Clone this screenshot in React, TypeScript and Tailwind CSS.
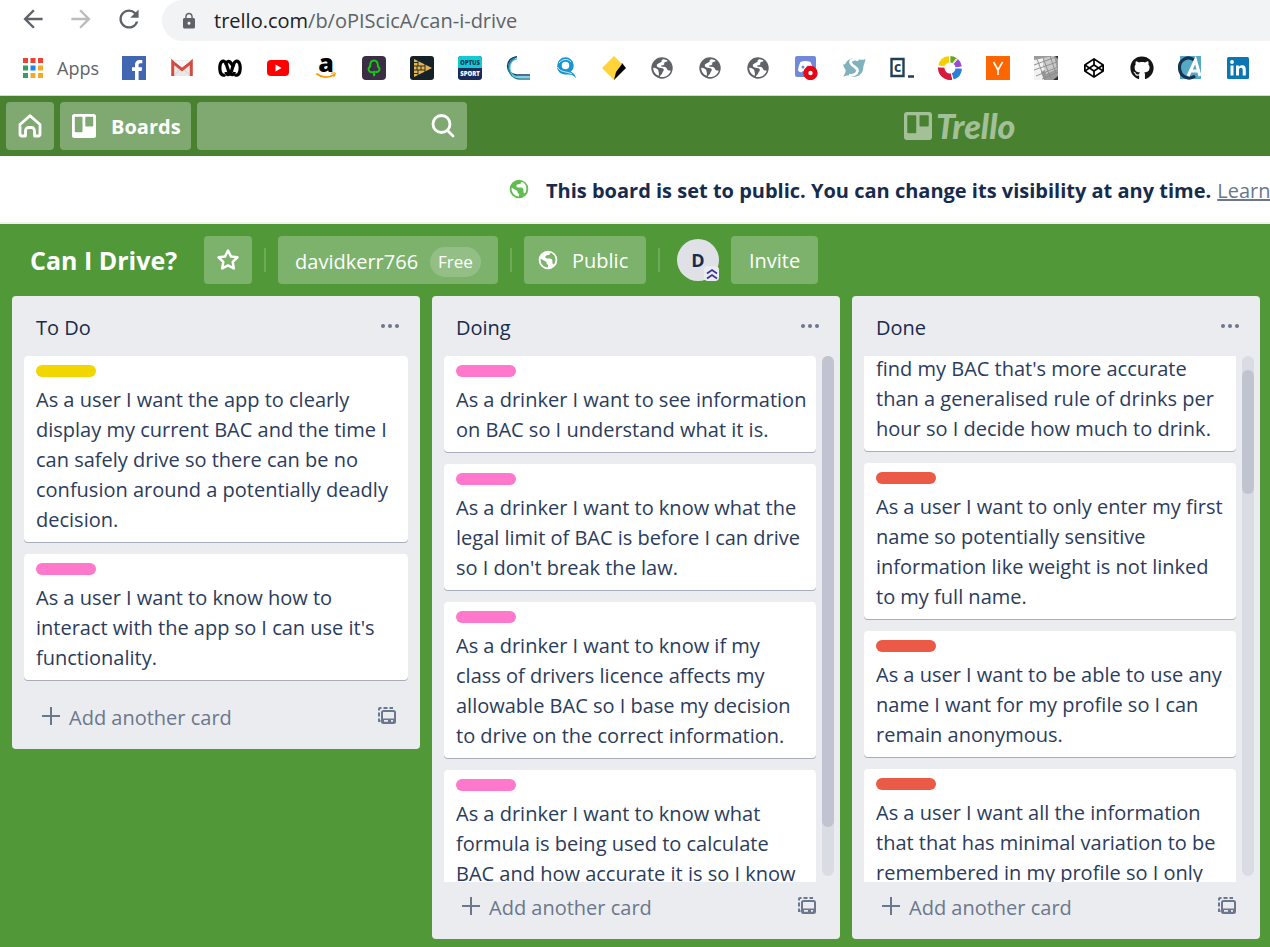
import React from "react";
import { FaCodepen, FaGithub } from "react-icons/fa";
import { MdArrowBack, MdArrowForward, MdLock, MdRefresh } from "react-icons/md";

type CardData = { label: string; text: string };

const yellow = "bg-[#f2d600]";
const pink = "bg-[#ff78cb]";
const red = "bg-[#eb5a46]";

const todo: CardData[] = [
  { label: yellow, text: "As a user I want the app to clearly display my current BAC and the time I can safely drive so there can be no confusion around a potentially deadly decision." },
  { label: pink, text: "As a user I want to know how to interact with the app so I can use it's functionality." },
];

const doing: CardData[] = [
  { label: pink, text: "As a drinker I want to see information on BAC so I understand what it is." },
  { label: pink, text: "As a drinker I want to know what the legal limit of BAC is before I can drive so I don't break the law." },
  { label: pink, text: "As a drinker I want to know if my class of drivers licence affects my allowable BAC so I base my decision to drive on the correct information." },
  { label: pink, text: "As a drinker I want to know what formula is being used to calculate BAC and how accurate it is so I know" },
];

const done: CardData[] = [
  { label: "", text: "find my BAC that's more accurate than a generalised rule of drinks per hour so I decide how much to drink." },
  { label: red, text: "As a user I want to only enter my first name so potentially sensitive information like weight is not linked to my full name." },
  { label: red, text: "As a user I want to be able to use any name I want for my profile so I can remain anonymous." },
  { label: red, text: "As a user I want all the information that that has minimal variation to be remembered in my profile so I only" },
];

function Svg({ children, className = "size-6", box = "0 0 24 24" }: { children: React.ReactNode; className?: string; box?: string }) {
  return (
    <svg viewBox={box} className={className} fill="none" aria-hidden="true">
      {children}
    </svg>
  );
}

function WorldIcon({ className }: { className: string }) {
  return (
    <Svg className={className} box="0 0 20 20">
      <path
        fillRule="evenodd"
        fill="currentColor"
        d="M10 .7a9.300 9.300 0 1 0 0 18.600A9.300 9.300 0 0 0 10 .7ZM2.700 8.800 7.200 11.300c1.400.7 1.500 1.700 1.500 2.700l1.600 1.200-.5 2.200C5.500 17.400 2 13.500 2.700 8.800ZM7.500 7.800C7 6.500 7.600 5.500 9 5.200l2.500-.5 1-2c2.600.9 4.300 2.900 4.800 5.500.4 2.300-.1 4.500-1.500 6.300l-1.300-1.100-.1-2.600c-.2-1.500-1.100-2.200-2.500-2.300-1.500-.1-2.600.6-4.400-.7Z"
      />
    </Svg>
  );
}

function BoardIcon({ className }: { className: string }) {
  return (
    <Svg className={className}>
      <path
        fillRule="evenodd"
        fill="currentColor"
        d="M2.500 0h19A2.500 2.500 0 0 1 24 2.500v19a2.500 2.500 0 0 1-2.500 2.500h-19A2.500 2.500 0 0 1 0 21.500v-19A2.500 2.500 0 0 1 2.500 0ZM3.500 2.700a.7.7 0 0 0-.7.7v14.200c0 .4.3.7.7.7h6.300c.4 0 .7-.3.7-.7V3.400a.7.7 0 0 0-.7-.7H3.500ZM14 2.700a.7.7 0 0 0-.7.7v8.400c0 .4.3.7.7.7h6.500c.4 0 .7-.3.7-.7V3.400a.7.7 0 0 0-.7-.7H14Z"
      />
    </Svg>
  );
}

function GlobeFavicon() {
  return (
    <Svg>
      <circle cx="12" cy="12" r="10.700" fill="#5f6368" />
      <path d="M13.500 3.300c-1.500.3-2.300 1.300-1.900 2.400L8.900 7.300c-2.600.9-2.700 3-.9 3.900 2 .9 4.400.2 5.600 1.900.9 1.500-1 2.300-1.200 3.600-.2 1.400-1.600 2-2.300 3.300-.3.600.1 1 .8 1 4.500.4 8.400-1.900 9.900-6.300-1.700-.2-2.600.1-3.500-1.200-.6-1.700-1.500-2.700-3.400-2.800-1.200 0-2.600.1-3-.7.5-1.200 2.700-.3 3.300-1.500.4-1-.5-1.500.5-2.200 1-.6 2.200-.5 3-1.200-1-1-2.500-1.700-4.200-1.800Z" fill="#fff" />
      <path d="M3.200 11.800c2.700.3 5 1.200 5.200 3 .1 1.500 1 2.600.3 5C5.200 18.500 3.200 15.300 3.200 11.800Z" fill="#fff" />
    </Svg>
  );
}

const bookmarks: { name: string; icon: React.ReactNode }[] = [
  {
    name: "Facebook",
    icon: (
      <Svg>
        <path fill="#4267b2" d="M0 0h24v24H0z" />
        <path fill="#fff" d="M13 24v-9h-3v-3.700h3V8.600c0-3 1.900-4.700 4.600-4.700 1.300 0 2.400.1 2.700.1v3.300h-1.900c-1.500 0-1.800.7-1.800 1.800v2.200h3.500l-.5 3.700h-3v9z" />
      </Svg>
    ),
  },
  {
    name: "Gmail",
    icon: (
      <Svg>
        <path fill="#e8e8e8" d="M3 4h18v16H3z" />
        <path d="m4 19 8-7 8 7" stroke="#d3d3d3" />
        <path d="M2.700 20V6l9.300 7.500L21.300 6v14" stroke="#d54b3f" strokeWidth="3" />
        <path d="m3 4.500 9 7 9-7" fill="#f6f6f6" />
      </Svg>
    ),
  },
  {
    name: "ABC",
    icon: (
      <Svg>
        <g stroke="#000" strokeWidth="3.200" strokeLinejoin="round">
          <path d="M7 18.500C5 20.500 1.800 18.500 1.800 12S5 3.500 7.500 6.500c2 3 2 8 4.500 11 2 2.300 4 1 4.500-1.500" />
          <path d="M8 16c.5 3 3 3.500 4.500 1 2-3 2-7.500 4-10.500 2.500-3 5.700-1 5.700 5.500s-3.200 8.500-5.200 6.500" />
          <path d="M8 9c.5-3.500 2.500-4.500 4-3s2 2 3.500 5" />
        </g>
      </Svg>
    ),
  },
  {
    name: "YouTube",
    icon: (
      <Svg>
        <rect x="1" y="4" width="22" height="16" rx="4" fill="red" />
        <path fill="#fff" d="m9.500 8.500 6 3.500-6 3.500z" />
      </Svg>
    ),
  },
  {
    name: "Amazon",
    icon: (
      <Svg>
        <text x="12" y="16" textAnchor="middle" fontFamily="Open Sans, sans-serif" fontWeight="800" fontSize="25" fill="#000">a</text>
        <path d="M3 18c5 4 12 4 17 .8" stroke="#f90" strokeWidth="1.800" strokeLinecap="round" />
        <path d="M17.500 17.300c2-.7 3.500-.5 3.700-.1s-.2 2-1.500 3.400" stroke="#f90" strokeWidth="1.100" strokeLinecap="round" />
      </Svg>
    ),
  },
  {
    name: "Gumtree",
    icon: (
      <Svg>
        <rect width="24" height="24" rx="4" fill="#3b2d44" />
        <path d="M12 19.500v-3.500c-3 1-5.500-.5-5.500-3 0-1.500.8-2 1.500-2.500C8 6.500 10 4.500 12 4.500s4 2 4 6c.7.500 1.500 1 1.500 2.500 0 2-1.500 3.300-3.500 3" stroke="#13c913" strokeWidth="2" strokeLinecap="round" />
      </Svg>
    ),
  },
  {
    name: "Arrow",
    icon: (
      <Svg>
        <rect width="24" height="24" rx="3" fill="#152128" />
        <path fill="#e9b44c" d="M4 3v18l18-9z" />
        <path d="M4 6.500h4M4 10h11M4 14h11M4 17.500h4M8 5v5M11 10v4M7 10v4M15 8v8M8 14v5" stroke="#152128" strokeWidth=".9" />
      </Svg>
    ),
  },
  {
    name: "Optus Sport",
    icon: (
      <Svg>
        <rect width="24" height="24" rx="3" fill="#1b2a5c" />
        <path fill="#10cbd6" d="M0 12V3a3 3 0 0 1 3-3h18a3 3 0 0 1 3 3v9z" />
        <text x="12" y="9" textAnchor="middle" fontFamily="Open Sans, sans-serif" fontWeight="800" fontSize="6" fill="#123c5a">OPTUS</text>
        <text x="12" y="20" textAnchor="middle" fontFamily="Open Sans, sans-serif" fontWeight="800" fontSize="6" fill="#fff">SPORT</text>
      </Svg>
    ),
  },
  {
    name: "Curve",
    icon: (
      <Svg>
        <path d="M11 .8C-2 2-1 19 11 19h13" stroke="#173f67" strokeWidth="1.600" />
        <path d="M11 2.800C1 4 1 20 12 21h12" stroke="#5cc3d8" strokeWidth="1.600" />
        <path d="M9 2C-1 6 1 22 13 23h11" stroke="#237e9d" strokeWidth="1.400" />
      </Svg>
    ),
  },
  {
    name: "Q",
    icon: (
      <Svg>
        <circle cx="11.500" cy="9.500" r="6" stroke="#1795d3" strokeWidth="4.500" />
        <path d="M3 10c0 7 6 9 10 8.500 4-.4 6 .5 9 3.500-1-4-3-5-5.500-6.500L9 15z" fill="#1795d3" />
        <path d="M3.500 11c3 6 9 4 14.500 7M5 7c3-4 9-5 12-1" stroke="#fff" strokeWidth=".8" />
      </Svg>
    ),
  },
  {
    name: "CommBank",
    icon: (
      <Svg>
        <path d="M12 24 24 12l-4-5-8 9z" fill="#000" />
        <path d="M12 0 0 12l12 12 2-8 6-8z" fill="#ffd43b" />
      </Svg>
    ),
  },
  { name: "Site one", icon: <GlobeFavicon /> },
  { name: "Site two", icon: <GlobeFavicon /> },
  { name: "Site three", icon: <GlobeFavicon /> },
  {
    name: "Discord",
    icon: (
      <Svg>
        <rect x="1" width="21" height="21" rx="2" fill="#7289da" />
        <path d="M6.500 6c3-1.500 7-1.500 10 0 1.500 3 2.500 6 2.300 9-1.200 1-2.500 1.300-3.600 1.300L14 15H9l-1.200 1.300c-1.100 0-2.600-.3-3.600-1.300C4 12 5 9 6.500 6Z" fill="#fff" />
        <circle cx="9" cy="11" r="1.500" fill="#7289da" />
        <circle cx="14" cy="11" r="1.500" fill="#7289da" />
        <circle cx="16.500" cy="17" r="7.200" fill="#e40613" />
        <circle cx="16.500" cy="17" r="2.200" fill="#fff" />
      </Svg>
    ),
  },
  {
    name: "S",
    icon: (
      <Svg>
        <path d="M1 8c1 .8 1.800.8 2.500-.5C5.500 2.500 12 .8 16.500 3.200c2 1 4.500.8 7-.2-.5 3.500-2 5.500-2.200 8.500-.3 8.500-8.800 11-13.800 8.500-2-1-4.500.2-6.500.8 2-3 3-4.500 2.500-7.300C2 12 1.500 10 1 8Z" fill="#7fb2bd" />
        <path d="M16.500 4c-5-2-9 .3-7.500 3.500s7 4 6.500 7.500c-.5 3-4.500 5-8.500 4" stroke="#fff" strokeWidth="2.800" />
      </Svg>
    ),
  },
  {
    name: "Codecademy",
    icon: (
      <Svg>
        <path d="M1.500 3h12v17h-12zM18 20.500h6" stroke="#204056" strokeWidth="2.400" />
        <text x="7.500" y="16" textAnchor="middle" fontFamily="Open Sans, sans-serif" fontWeight="700" fontSize="14" fill="#204056">c</text>
      </Svg>
    ),
  },
  {
    name: "Colour wheel",
    icon: (
      <Svg>
        <g strokeWidth="6.500">
          <path d="M3.500 10A8.700 8.700 0 0 1 11 3.300" stroke="#f5cf00" />
          <path d="M12 3.300a8.700 8.700 0 0 1 5 1.700" stroke="#6aa51e" />
          <path d="M17.800 5.500A8.700 8.700 0 0 1 20.700 11" stroke="#9b4bd0" />
          <path d="M20.700 12.500a8.700 8.700 0 0 1-6 7.800" stroke="#2b7fd6" />
          <path d="M13.700 20.600A8.700 8.700 0 0 1 3.300 11.500" stroke="#d41b3c" />
        </g>
        <path d="m1 11 6-1M12 0v7M18 3l-4 5M24 11l-7 1M15 24l-2-8" stroke="#fff" strokeWidth=".8" />
      </Svg>
    ),
  },
  {
    name: "Hacker News",
    icon: (
      <Svg>
        <path fill="#f60" d="M0 0h24v24H0z" />
        <path d="m7.500 6 4.500 8 4.500-8M12 13v6" stroke="#fff" strokeWidth="1.600" />
      </Svg>
    ),
  },
  {
    name: "Keyboard",
    icon: (
      <Svg>
        <path fill="#9b9b9b" d="M0 0h24v24H0z" />
        <path fill="#f2f2f2" d="M0 4v20h10l-3-8 10-6L10 2z" />
        <path fill="#c9c9c9" d="m9 2 11-2 3 13-11 5-3-8z" />
        <path d="M0 9 22 1M0 14 23 6M2 20l22-9M8 23l16-7M3 3l8 21M9 2l8 21M16 0l6 17" stroke="#8b8b8b" strokeWidth=".9" />
        <path d="M24 0v3l-3-3zM24 20v4h-5z" fill="#333" />
      </Svg>
    ),
  },
  { name: "CodePen", icon: <FaCodepen className="size-5 text-black" /> },
  { name: "GitHub", icon: <FaGithub className="size-6 text-[#161514]" /> },
  {
    name: "Coder Academy",
    icon: (
      <Svg>
        <path fill="#57a9c3" d="M2 0h21v23H2z" />
        <path d="M16 4C10-1 1 4 1.500 12S10 25 17 20" stroke="#173452" strokeWidth="3.200" />
        <path d="m10 20 7.500-16L22 20M13 15h8" stroke="#fff" strokeWidth="3" />
      </Svg>
    ),
  },
  {
    name: "LinkedIn",
    icon: (
      <Svg>
        <rect x="1" y="1" width="22" height="22" rx="1.500" fill="#0a76b4" />
        <path fill="#fff" d="M4.500 9.500h3v10h-3zM10 9.500h2.900v1.400c.5-.9 1.500-1.700 3.200-1.700 3 0 3.700 2 3.700 4.700v5.600h-3.100v-5c0-1.300 0-2.800-1.700-2.800s-2 1.300-2 2.700v5.100h-3z" />
        <circle cx="6" cy="6" r="1.900" fill="#fff" />
      </Svg>
    ),
  },
];

const appColours = ["#ea4335", "#ea4335", "#ea4335", "#34a060", "#1a87f0", "#f0ac26", "#34a060", "#f0ac26", "#f0ac26"];

function BrowserBar() {
  return (
    <div className="shrink-0 border-b border-[#d5dbd2] bg-white">
      <div className="flex h-[41px] items-center text-[#5f6368]">
        <nav className="flex w-[162px] shrink-0 items-center gap-6 pb-1 pl-[21px]" aria-label="Browser">
          <button aria-label="Back" className="size-6"><MdArrowBack className="size-6 scale-120" /></button>
          <button aria-label="Forward" className="size-6 text-[#babcbe]"><MdArrowForward className="size-6 scale-120" /></button>
          <button aria-label="Reload" className="size-6"><MdRefresh className="size-6 scale-120" /></button>
        </nav>
        <div className="flex h-full flex-1 items-center gap-4 rounded-l-full bg-[#f1f3f4] pl-[18px]">
          <MdLock className="size-[18px]" />
          <a href="#address" className="text-[20px] leading-6 whitespace-nowrap">
            <span className="text-[#202124]">trello.com</span>/b/oPIScicA/can-i-drive
          </a>
        </div>
      </div>
      <div className="flex h-[54px] items-center gap-6 overflow-hidden pl-[23px]">
        <a href="#apps" className="flex w-[75px] shrink-0 items-center gap-[14px] text-[18px] text-[#5f6368]">
          <Svg className="size-5 shrink-0" box="0 0 20 20">
            {appColours.map((c, i) => (
              <rect key={i} x={(i % 3) * 7.5} y={Math.floor(i / 3) * 7.5} width="5" height="5" fill={c} />
            ))}
          </Svg>
          Apps
        </a>
        {bookmarks.map((b) => (
          <a key={b.name} href="#bookmark" aria-label={b.name} className="flex size-6 shrink-0 items-center justify-center">
            {b.icon}
          </a>
        ))}
      </div>
    </div>
  );
}

function TrelloHeader() {
  return (
    <header className="flex h-[60px] shrink-0 items-center gap-[6px] bg-[#488231] px-[6px] text-white">
      <button aria-label="Home" className="flex size-12 shrink-0 items-center justify-center rounded bg-[#80a972]">
        <Svg>
          <path d="M2 10.500 12 1.700l10 8.800V20a2 2 0 0 1-2 2h-3.500v-5.500a3 3 0 0 0-3-3h-3a3 3 0 0 0-3 3V22H4a2 2 0 0 1-2-2z" stroke="currentColor" strokeWidth="2.800" strokeLinejoin="round" />
        </Svg>
      </button>
      <button className="flex h-12 w-[131px] shrink-0 items-center gap-[15px] rounded bg-[#80a972] pl-3 text-[20px] font-bold">
        <BoardIcon className="size-6 shrink-0" />
        <span className="pt-[2px]">Boards</span>
      </button>
      <label className="flex h-12 w-[270px] shrink-0 items-center rounded bg-[#80a972] px-3">
        <input aria-label="Search" className="min-w-0 flex-1 bg-transparent outline-none" />
        <Svg>
          <circle cx="10.500" cy="10" r="8.500" stroke="currentColor" strokeWidth="2.800" />
          <path d="m16.500 16.500 5.500 5.500" stroke="currentColor" strokeWidth="2.800" strokeLinecap="round" />
        </Svg>
      </label>
      <a href="#home" className="ml-[431px] flex items-center gap-1 text-[#a3c098]">
        <BoardIcon className="size-[28px]" />
        <span className="font-[Lato] text-[34px] leading-8 font-black italic">Trello</span>
      </a>
    </header>
  );
}

function Divider({ className = "mx-3" }: { className?: string }) {
  return <span className={`h-6 w-[2px] shrink-0 bg-[#6fa95a] ${className}`} />;
}

function BoardHeader() {
  return (
    <div className="flex h-[72px] shrink-0 items-center pl-[30px] text-[20px] whitespace-nowrap text-white">
      <h1 className="w-[174px] shrink-0 pt-[2px] text-[25px] font-bold">Can I Drive?</h1>
      <button aria-label="Star board" className="flex size-12 shrink-0 items-center justify-center rounded bg-[#7cb26b]">
        <Svg>
          <path d="m12 2.500 2.900 5.900 6.500.9-4.700 4.600 1.100 6.500-5.800-3-5.800 3 1.100-6.500-4.700-4.600 6.500-.9z" stroke="currentColor" strokeWidth="2.500" strokeLinejoin="round" />
        </Svg>
      </button>
      <Divider />
      <button className="flex h-12 w-[220px] shrink-0 items-center justify-center gap-3 rounded bg-[#7cb26b] pt-[3px]">
        davidkerr766
        <span className="rounded-full bg-[#93bf86] px-2 text-[17px] leading-[30px]">Free</span>
      </button>
      <Divider />
      <button className="flex h-12 w-[122px] shrink-0 items-center gap-[14px] rounded bg-[#7cb26b] pl-[14px]">
        <WorldIcon className="size-5" />
        <span className="pt-[2px]">Public</span>
      </button>
      <Divider className="mr-[17px] ml-3" />
      <div className="relative flex size-[42px] shrink-0 items-center justify-center rounded-full bg-[#dfe1e6] text-[18px] font-bold text-[#172b4d]">
        D
        <span className="absolute right-0 bottom-0 flex size-[15px] items-center justify-center rounded-sm bg-[#ebecf0]">
          <Svg className="size-[14px]" box="0 0 14 14">
            <path d="M2 6.500 7 3l5 3.500M2 11.500 7 8l5 3.500" stroke="#403294" strokeWidth="1.700" />
          </Svg>
        </span>
      </div>
      <button className="ml-3 h-12 w-[87px] shrink-0 rounded bg-[#7cb26b] pt-[2px]">Invite</button>
    </div>
  );
}

function Card({ card }: { card: CardData }) {
  if (!card.label) {
    return <article className="-mt-[2px] shrink-0 rounded-b bg-white pr-2 pb-[7px] pl-3 shadow-[0_1px_0_#a9adba]">{card.text}</article>;
  }
  return (
    <article className="shrink-0 rounded bg-white pt-[9px] pr-2 pb-[7px] pl-3 shadow-[0_1px_0_#a9adba]">
      <div className={`mb-2 h-3 w-[60px] rounded-full ${card.label}`} />
      <p>{card.text}</p>
    </article>
  );
}

function List({ title, cards, thumb }: { title: string; cards: CardData[]; thumb?: string }) {
  return (
    <section className="flex max-h-full w-[408px] shrink-0 flex-col rounded bg-[#ebecf0] text-[20px] leading-[30px] text-[#2b3c5c]">
      <div className="flex h-[60px] shrink-0 items-center justify-between pt-1 pr-5 pl-6">
        <h2 className="text-[#172b4d]">{title}</h2>
        <button aria-label="List actions" className="text-[#6b778c]">
          <Svg className="mb-1 h-5 w-5" box="0 0 20 20">
            <circle cx="3" cy="10" r="2" fill="currentColor" />
            <circle cx="10" cy="10" r="2" fill="currentColor" />
            <circle cx="17" cy="10" r="2" fill="currentColor" />
          </Svg>
        </button>
      </div>
      <div className={`flex min-h-0 gap-[6px] pl-3 ${thumb ? "pr-[6px]" : "pr-3"}`}>
        <div className={`flex min-w-0 flex-1 flex-col gap-3 overflow-hidden ${thumb ? "" : "pb-3"}`}>
          {cards.map((c) => (
            <Card key={c.text} card={c} />
          ))}
        </div>
        {thumb && (
          <div className="mb-[6px] w-3 shrink-0 rounded-full bg-[#dadce3]">
            <div className={`w-3 rounded-full bg-[#bfc4d0] ${thumb}`} />
          </div>
        )}
      </div>
      <div className="flex h-[57px] shrink-0 items-center justify-between pr-[23px] pb-[6px] pl-[29px] text-[#6b778c]">
        <button className="flex items-center gap-2">
          <Svg className="mb-1 size-5" box="0 0 20 20">
            <path d="M10 1v18M1 10h18" stroke="currentColor" strokeWidth="2" />
          </Svg>
          Add another card
        </button>
        <button aria-label="Create from template">
          <Svg className="mb-1 size-5" box="0 0 20 20">
            <path d="M2 4.500V3a1 1 0 0 1 1-1h1.500M6.500 2h4M12.500 2H16M2 6.500v4M2 12.500V15h1.500" stroke="currentColor" strokeWidth="2" />
            <rect x="5" y="5" width="13" height="12" rx="1.500" stroke="currentColor" strokeWidth="2" />
            <path d="M5 12.500h13V17H5z" fill="currentColor" />
            <path d="M7 14h4v1.700H7zM14 14h2v1.700h-2z" fill="#ebecf0" />
          </Svg>
        </button>
      </div>
    </section>
  );
}

export default function App() {
  return (
    <div className="flex h-screen flex-col overflow-hidden bg-[#519839] font-['Open_Sans',sans-serif]">
      <BrowserBar />
      <TrelloHeader />
      <div className="flex h-[68px] shrink-0 items-center border-b-2 border-[#eef3ec] bg-white pl-[509px] text-[20px] whitespace-nowrap">
        <WorldIcon className="size-5 shrink-0 text-[#61bd4f]" />
        <strong className="ml-[17px] pt-[3px] font-bold text-[#172b4d]">This board is set to public. You can change its visibility at any time.</strong>
        <a href="#learn" className="ml-[6px] pt-[3px] text-[#6b778c] underline">Learn</a>
      </div>
      <BoardHeader />
      <main className="flex min-h-0 flex-1 items-start gap-3 px-3 pb-2">
        <List title="To Do" cards={todo} />
        <List title="Doing" cards={doing} thumb="h-[471px]" />
        <List title="Done" cards={done} thumb="mt-[14px] h-[124px]" />
      </main>
    </div>
  );
}
